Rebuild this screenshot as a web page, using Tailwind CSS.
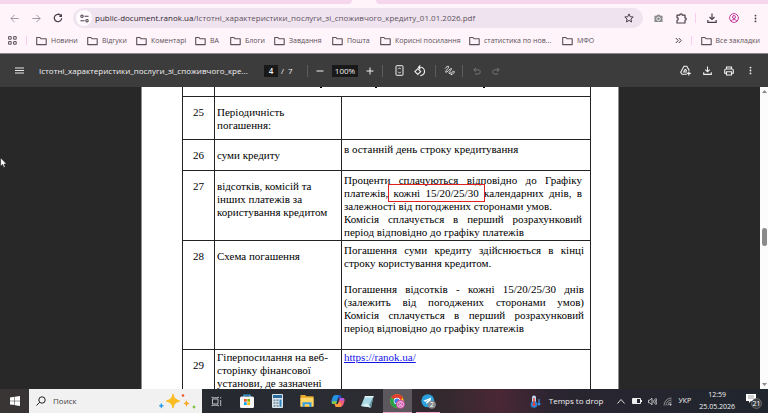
<!DOCTYPE html>
<html lang="uk">
<head>
<meta charset="utf-8">
<title>Істотні характеристики послуги</title>
<script src="https://cdn.jsdelivr.net/npm/@tailwindcss/browser@4"></script>
</head>
<body class="flex h-screen flex-col overflow-hidden bg-[#282828] font-['Open_Sans','Noto_Sans',sans-serif] text-[8px] leading-3">
<svg class="hidden" aria-hidden="true">
  <symbol id="folder" viewBox="0 0 11 10"><path d="M.7 8.2V1.5h3.2l1.1 1.2h5.2v5.9H.7z" fill="none" stroke="#5b5059" stroke-width="1.1" stroke-linejoin="round"/></symbol>
  <symbol id="dots" viewBox="0 0 10 10"><circle cx="5" cy="1.8" r="1"/><circle cx="5" cy="5" r="1"/><circle cx="5" cy="8.2" r="1"/></symbol>
  <symbol id="download" viewBox="0 0 10 10"><path d="M5 .5v6M2.5 4 5 6.5 7.500 4M.8 7v2.300h8.400V7" fill="none" stroke="currentColor" stroke-width="1.200"/></symbol>
</svg>

<header class="shrink-0 bg-[#fff4fa] text-[#5b5059]">
  <!-- Tab strip -->
  <div class="flex h-1 bg-[#fff4fa]">
    <div class="h-full w-[352px] rounded-br-md bg-[#f5d6ec]"></div>
    <div class="w-6"></div>
    <div class="h-full flex-1 rounded-bl-md bg-[#f5d6ec]"></div>
  </div>
  <!-- Address row -->
  <div class="flex h-7 items-center pr-2 pl-2">
    <button aria-label="Назад" class="w-[22px]"><svg class="ml-[2px] size-[9px]" viewBox="0 0 10 10" fill="none" stroke="#a097a0" stroke-width="1.1"><path d="M9.500 5H1M5 1 1 5l4 4"/></svg></button>
    <button aria-label="Вперед" class="w-[22px]"><svg class="ml-[2px] size-[9px]" viewBox="0 0 10 10" fill="none" stroke="#a097a0" stroke-width="1.1"><path d="M.5 5H9M5 1l4 4-4 4"/></svg></button>
    <button aria-label="Оновити" class="w-[21px]"><svg class="ml-[1px] size-[10px]" viewBox="0 0 10 10"><path d="M8.700 5.300A3.700 3.700 0 1 1 7.600 2.300L8.500 3.200" fill="none" stroke="#4a3f49" stroke-width="1.300"/><path d="M9 .8v3.200H5.800z" fill="#4a3f49"/></svg></button>
    <div class="flex h-5 min-w-0 flex-1 items-center rounded-full bg-[#efe3ef] pr-[9px] pl-[3px]">
      <button aria-label="Інформація про сайт" class="flex size-4 shrink-0 items-center justify-center rounded-full bg-[#fffafd]"><svg class="size-[9px]" viewBox="0 0 10 10" fill="none" stroke="#4a3f49" stroke-width="1.200"><circle cx="2.200" cy="2.500" r="1.300"/><path d="M5 2.500h4.500M.5 7.500H5"/><circle cx="7.800" cy="7.500" r="1.300"/></svg></button>
      <div class="ml-[3px] min-w-0 flex-1 whitespace-nowrap text-[#5f545e]" role="textbox" aria-label="Адреса" tabindex="0"><span class="text-[#30272f]">public-document.ranok.ua</span>/Істотні_характеристики_послуги_зі_споживчого_кредиту_01.01.2026.pdf</div>
      <button aria-label="Додати закладку"><svg class="size-[10px]" viewBox="0 0 10 10"><path d="M5 .9 6.200 3.700l3 .3L6.900 6l.7 3L5 7.400 2.400 9l.7-3L.8 4l3-.3z" fill="none" stroke="#4a3f49" stroke-width="1"/></svg></button>
    </div>
    <button aria-label="Камера" class="ml-[11px]"><svg class="size-[9px]" viewBox="0 0 10 10"><path d="M.5 2h2.300L3.500.8h3L7.200 2h2.300v7h-9z" fill="#8b8b8b"/><circle cx="5" cy="5.400" r="2" fill="none" stroke="#fff" stroke-width=".9"/></svg></button>
    <button aria-label="Розширення" class="ml-[13px]"><svg class="size-[11px]" viewBox="0 0 11 11"><path d="M1 2.200h2.700C3.700.4 6.300.4 6.300 2.200H9v2.700c1.700 0 1.700 2.200 0 2.200V10H1V7.300c1.700-.2 1.700-2.400 0-2.600z" fill="none" stroke="#4a3f49" stroke-width="1.200" stroke-linejoin="round"/></svg></button>
    <div class="ml-2 h-[10px] w-px bg-[#f9cdf0]"></div>
    <button aria-label="Завантаження" class="ml-[11px] text-[#4a3f49]"><svg class="size-[10px]"><use href="#download"/></svg></button>
    <button aria-label="Профіль" class="ml-3"><svg class="size-[10px]" viewBox="0 0 10 10" fill="none" stroke="#c23a9c"><circle cx="5" cy="5" r="4.400"/><circle cx="5" cy="4" r="1.500"/><path d="M2 8.200c1-2.200 5-2.200 6 0"/></svg></button>
    <button aria-label="Меню" class="ml-3"><svg class="size-[9px]" fill="#4a3f49"><use href="#dots"/></svg></button>
  </div>
  <!-- Bookmarks -->
  <nav class="flex h-[21px] items-center pb-1 pl-2 pr-2 text-[7px] whitespace-nowrap" aria-label="Закладки">
    <button aria-label="Програми"><svg class="size-[9px]" viewBox="0 0 9 9" fill="none" stroke="#5b5059"><path d="M.6.6h2.600v2.600H.6zM5.600.6h2.600v2.600H5.600zM.6 5.600h2.600v2.600H.6zM5.600 5.600h2.600v2.600H5.600z"/></svg></button>
    <div class="mr-[9px] ml-[9px] h-[9px] w-px bg-[#f9cdf0]"></div>
    <a href="#" class="flex w-[51px] items-center gap-1"><svg class="h-[10px] w-[11px] shrink-0"><use href="#folder"/></svg>Новини</a>
    <a href="#" class="flex w-[49px] items-center gap-1"><svg class="h-[10px] w-[11px] shrink-0"><use href="#folder"/></svg>Відгуки</a>
    <a href="#" class="flex w-[59px] items-center gap-1"><svg class="h-[10px] w-[11px] shrink-0"><use href="#folder"/></svg>Коментарі</a>
    <a href="#" class="flex w-[35px] items-center gap-1"><svg class="h-[10px] w-[11px] shrink-0"><use href="#folder"/></svg>ВА</a>
    <a href="#" class="flex w-[44px] items-center gap-1"><svg class="h-[10px] w-[11px] shrink-0"><use href="#folder"/></svg>Блоги</a>
    <a href="#" class="flex w-[58px] items-center gap-1"><svg class="h-[10px] w-[11px] shrink-0"><use href="#folder"/></svg>Завдання</a>
    <a href="#" class="flex w-[48px] items-center gap-1"><svg class="h-[10px] w-[11px] shrink-0"><use href="#folder"/></svg>Пошта</a>
    <a href="#" class="flex w-[89px] items-center gap-1"><svg class="h-[10px] w-[11px] shrink-0"><use href="#folder"/></svg>Корисні посилання</a>
    <a href="#" class="flex w-[93px] items-center gap-1"><svg class="h-[10px] w-[11px] shrink-0"><use href="#folder"/></svg>статистика по нов...</a>
    <a href="#" class="flex items-center gap-1"><svg class="h-[10px] w-[11px] shrink-0"><use href="#folder"/></svg>МФО</a>
    <button aria-label="Інші закладки" class="ml-auto"><svg class="size-[7px]" viewBox="0 0 7 7" fill="none" stroke="#4a3f49"><path d="m.8 1 2.400 2.500L.8 6M3.800 1l2.400 2.500L3.800 6"/></svg></button>
    <div class="mx-[9px] h-[9px] w-px bg-[#f9cdf0]"></div>
    <a href="#" class="flex items-center gap-1"><svg class="h-[10px] w-[11px] shrink-0"><use href="#folder"/></svg>Все закладки</a>
  </nav>
</header>

<!-- PDF toolbar -->
<div class="flex h-[34px] shrink-0 items-center border-t border-[#8a858a] bg-[#3c3c3c] pr-[13px] pl-[15px] text-[#f1f1f1]" role="toolbar" aria-label="Перегляд PDF">
  <button aria-label="Меню документа"><svg class="h-[7px] w-[9px]" viewBox="0 0 9 7" stroke="#e8e8e8"><path d="M0 1h9M0 3.500h9M0 6h9"/></svg></button>
  <h1 class="ml-[15px] w-[225px] font-medium whitespace-nowrap">Істотні_характеристики_послуги_зі_споживчого_кре...</h1>
  <input aria-label="Сторінка" value="4" class="h-3 w-[14px] bg-[#191919] text-center font-semibold">
  <span class="ml-[3px] w-[26px]">/ &nbsp;7</span>
  <span class="h-3 w-px bg-[#5c5c5c]"></span>
  <button aria-label="Зменшити" class="ml-2"><svg class="size-[8px]" viewBox="0 0 8 8" stroke="#f1f1f1"><path d="M.5 4h7"/></svg></button>
  <input aria-label="Масштаб" value="100%" class="ml-2 h-3 w-[26px] bg-[#191919] text-center font-medium">
  <button aria-label="Збільшити" class="ml-2"><svg class="size-[8px]" viewBox="0 0 8 8" stroke="#f1f1f1"><path d="M.5 4h7M4 .5v7"/></svg></button>
  <span class="ml-2 h-3 w-px bg-[#5c5c5c]"></span>
  <button aria-label="За розміром сторінки" class="ml-3"><svg class="h-[11px] w-[9px]" viewBox="0 0 9 11" fill="none" stroke="#f1f1f1"><rect x="1" y=".7" width="7" height="9.600" rx=".6"/><path d="M3.200 4.200 4.500 2.800l1.300 1.400M3.200 6.800l1.300 1.400 1.300-1.400" stroke-width=".9"/></svg></button>
  <button aria-label="Повернути" class="ml-[9px]"><svg class="size-[12px]" viewBox="0 0 12 12" fill="none" stroke="#f1f1f1" stroke-width="1.100"><path d="m4.800 3.700 2.900 2.900-2.900 2.900L1.900 6.600zM5.600 2.200h1.700a4.200 4.200 0 0 1 0 8.400M7.300.4 5.400 2.200l1.900 1.800"/></svg></button>
  <span class="ml-[10px] h-3 w-px bg-[#5c5c5c]"></span>
  <button aria-label="Малювати" class="ml-2"><svg class="size-[11px]" viewBox="0 0 11 11" fill="none" stroke="#f1f1f1" stroke-width=".9"><path d="M1 3.600C2.500 1.500 5 .3 4.700 2.100 4.300 3.700.7 6.500 1.800 7.300c1 .7 4.700-4.500 5.700-3.800C8.400 4.200 4.200 7.600 5 8.400c.6.5 1.400-.4 2-.9M7 9.800l.2-1.500 2.300-2.400 1.100 1.100-2.300 2.400z"/></svg></button>
  <span class="ml-[7px] h-3 w-px bg-[#5c5c5c]"></span>
  <button aria-label="Скасувати" class="ml-[10px]"><svg class="size-[8px]" viewBox="0 0 8 8" fill="none" stroke="#757575"><path d="M2.800.8.800 2.800l2 2M.8 2.800h4.400a2.100 2.100 0 0 1 0 4.200H2"/></svg></button>
  <button aria-label="Повторити" class="ml-[11px]"><svg class="size-[8px]" viewBox="0 0 8 8" fill="none" stroke="#757575"><path d="m5.200.8 2 2-2 2M7.200 2.800H2.800a2.100 2.100 0 0 0 0 4.200H6"/></svg></button>
  <button aria-label="Зберегти на Диску" class="ml-auto"><svg class="size-[11px]" viewBox="0 0 11 11" fill="none" stroke="#f1f1f1" stroke-width="1.100"><path d="M6.800 9.300H2L.7 7.200 4 1.300h2.800L9.300 5.600M5.400 4 3.700 7h3.100M5.400 4l1.300 2.300M8.800 6.400v4M6.800 8.400h4"/></svg></button>
  <button aria-label="Завантажити" class="ml-3"><svg class="size-[9px]"><use href="#download"/></svg></button>
  <button aria-label="Друк" class="ml-3"><svg class="size-[10px]" viewBox="0 0 10 10" fill="none" stroke="#f1f1f1" stroke-width="1.100"><path d="M2.500 3V1h5v2M2.300 7.200H.7V4.300Q.7 3 2 3h6q1.300 0 1.300 1.300v2.900H7.700M2.500 5.700h5V9h-5z"/></svg></button>
  <button aria-label="Додатково" class="ml-3"><svg class="size-[9px]" fill="#f1f1f1"><use href="#dots"/></svg></button>
</div>

<!-- Document viewer -->
<main class="relative flex min-h-0 flex-1 overflow-hidden font-['Liberation_Serif',serif] text-[11px] leading-[13px] text-black">
  <div class="min-w-0 flex-1">
    <article class="mx-auto h-full w-[478px] border-x border-[#8e8e8e] bg-white pl-10">
      <table class="w-[409px] table-fixed border-collapse [&_td]:border [&_td]:border-[#222] [&_td]:p-0 [&_td]:align-top">
        <colgroup><col class="w-8"><col class="w-[127px]"><col></colgroup>
        <tbody>
          <tr class="h-[9px]"><td class="border-t-0!"></td><td colspan="2" class="border-t-0!"><svg class="block h-[2px] w-full" aria-hidden="true"><path d="M105 0h2v1h-2zM160 0h2v1h-2zM268 0h2v1h-2z"/></svg></td></tr>
          <tr class="h-[43px]"><td class="pt-[9px]! text-center">25</td><td class="pt-[9px]! pl-[2px]!">Періодичність<br>погашення:</td><td></td></tr>
          <tr class="h-[31px]"><td class="pt-[9px]! text-center">26</td><td class="pt-[9px]! pl-[2px]!">суми кредиту</td><td class="pt-[3px]! pl-[2px]!">в останній день строку кредитування</td></tr>
          <tr class="h-[70px]"><td class="pt-[9px]! text-center">27</td><td class="pt-[9px]! pl-[2px]!">відсотків, комісій та<br>інших платежів за<br>користування кредитом</td>
            <td class="pt-[3px]! pr-[8px]! pl-[2px]! whitespace-nowrap">
              <p class="[text-align-last:justify]">Проценти сплачуються відповідно до Графіку</p>
              <p class="[text-align-last:justify]">платежів, <span class="relative">кожні 15/20/25/30<span class="absolute -inset-x-[6px] -inset-y-[3px] border border-[#e02020]"></span></span> календарних днів, в</p>
              <p>залежності від погоджених сторонами умов.</p>
              <p class="[text-align-last:justify]">Комісія сплачується в перший розрахунковий</p>
              <p>період відповідно до графіку платежів</p>
            </td></tr>
          <tr class="h-[109px]"><td class="pt-[9px]! text-center">28</td><td class="pt-[9px]! pl-[2px]!">Схема погашення</td>
            <td class="pt-[3px]! pr-[6px]! pl-[2px]! whitespace-nowrap">
              <p class="[text-align-last:justify]">Погашення суми кредиту здійснюється в кінці</p>
              <p class="mb-[13px]">строку користування кредитом.</p>
              <p class="[text-align-last:justify]">Погашення відсотків - кожні 15/20/25/30 днів</p>
              <p class="[text-align-last:justify]">(залежить від погоджених сторонами умов)</p>
              <p class="[text-align-last:justify]">Комісія сплачується в перший розрахунковий</p>
              <p>період відповідно до графіку платежів</p>
            </td></tr>
          <tr class="h-[60px]"><td class="pt-[9px]! text-center">29</td><td class="pt-px! pl-[2px]!">Гіперпосилання на веб-<br>сторінку фінансової<br>установи, де зазначені</td><td class="pt-px! pl-[2px]!"><a href="#" class="text-[#1414e6] underline">https://ranok.ua/</a></td></tr>
        </tbody>
      </table>
    </article>
  </div>
  <div class="flex w-2 flex-col items-center bg-[#fcfcfc] py-[3px]" aria-hidden="true">
    <svg class="h-[3px] w-[5px]" viewBox="0 0 5 3"><path d="M0 3 2.500 0 5 3z" fill="#8a8a8a"/></svg>
    <div class="mt-[135px] h-[18px] w-[5px] rounded-full bg-[#8a8a8a]"></div>
    <svg class="mt-auto h-[3px] w-[5px]" viewBox="0 0 5 3"><path d="M0 0h5L2.500 3z" fill="#8a8a8a"/></svg>
  </div>
  <svg class="absolute top-[70px] left-0 h-3 w-[7px]" viewBox="0 0 7 12" aria-hidden="true"><path d="M.6.800v8.400l2-1.800 1.200 3 1.400-.6L4 7h2.500z" fill="#fff" stroke="#111" stroke-width=".5"/></svg>
</main>

<!-- Taskbar -->
<footer class="flex h-6 shrink-0 items-stretch bg-[linear-gradient(90deg,#3a3535_0%,#262a30_28%,#2b2d33_45%,#33292f_58%,#4a2735_65%,#2a2530_72%,#20262e_100%)] text-[#f0f0f0]">
  <button aria-label="Пуск" class="flex w-[29px] items-center justify-center"><svg class="size-[10px]" viewBox="0 0 10 10" fill="#fff"><path d="M0 1.400 4.500.8v3.900H0zM5 .700 10 0v4.700H5zM0 5.200h4.500v3.900L0 8.500zM5 5.200h5V10l-5-.700z"/></svg></button>
  <label class="flex w-[173px] items-center bg-[#f1f1f1] pl-[7px]">
    <svg class="size-[10px] shrink-0" viewBox="0 0 10 10" fill="none" stroke="#222"><circle cx="6" cy="4" r="3.200"/><path d="M3.700 6.300.5 9.500"/></svg>
    <input aria-label="Пошук" placeholder="Поиск" class="ml-[7px] w-[106px] placeholder:text-[#444]">
    <svg class="h-[18px] w-[38px] shrink-0" viewBox="0 0 38 18"><path d="M14 2c1.200 4.500 2 5.400 6.700 7-4.700 1.600-5.500 2.500-6.700 7-1.200-4.500-2-5.400-6.700-7C12 7.400 12.800 6.500 14 2z" fill="#fbbc21" stroke="#fbbc21" stroke-width="1" stroke-linejoin="round"/><path d="M27.500 8c.6 2.200 1 2.700 3.200 3.500-2.200.8-2.600 1.300-3.200 3.500-.6-2.200-1-2.700-3.200-3.500 2.200-.8 2.600-1.300 3.200-3.500z" fill="#f7a928"/><path d="M2.300 11.500c.4 1.500.7 1.800 2.200 2.300-1.500.6-1.800.9-2.200 2.300-.4-1.400-.7-1.700-2.200-2.300 1.500-.5 1.800-.8 2.200-2.300z" fill="#1e9bf0" stroke="#1e9bf0" stroke-width=".6"/><circle cx="24" cy="3.500" r="1.300" fill="#ee5b2b"/><circle cx="35" cy="15" r="1.400" fill="#7cc242"/></svg>
  </label>
  <button aria-label="Подання завдань" class="flex w-7 items-center justify-center"><svg class="size-[11px]" viewBox="0 0 11 11" fill="none" stroke="#c8c8c8" stroke-width=".9"><path d="M1.500 3h5.500v5H1.500zM.5 1.300h1M7 1.300h1M.5 9.700h1M7 9.700h1M1.500 1v.8h5.500V1M1.500 10v-.8h5.500v.8M9.700 1v1.500M9.700 4v6"/></svg></button>
  <button aria-label="Microsoft Store" class="flex w-[34px] items-center justify-center"><svg class="size-[14px]" viewBox="0 0 14 14"><path d="M4 3V1.200h6V3" fill="none" stroke="#39a9e8" stroke-width="1.200"/><rect y="2.500" width="14" height="11.500" rx="1.500" fill="#f7f7f7"/><path d="M4 5h2.700v2.700H4z" fill="#f25022"/><path d="M7.300 5H10v2.700H7.300z" fill="#7fba00"/><path d="M4 8.300h2.700V11H4z" fill="#00a4ef"/><path d="M7.300 8.300H10V11H7.300z" fill="#ffb900"/></svg></button>
  <button aria-label="Калькулятор" class="flex w-[26px] items-center justify-center"><svg class="h-[14px] w-[11px]" viewBox="0 0 11 14"><rect width="11" height="14" rx="1" fill="#d9e4ec"/><path d="M1 1h9v3H1z" fill="#2c6a9b"/><path d="M1.500 5.500h2v1.800h-2zM4.500 5.500h2v1.800h-2zM1.500 8.300h2v1.800h-2zM4.500 8.300h2v1.800h-2zM1.500 11h2v1.800h-2zM4.500 11h2v1.800h-2z" fill="#7b92a3"/><path d="M7.500 5.500h2v7.300h-2z" fill="#2f84c4"/></svg></button>
  <button aria-label="Провідник" class="flex w-[34px] items-center justify-center"><svg class="h-[12px] w-[14px]" viewBox="0 0 14 12"><path d="M.5 0h4.700l1 1.300h7.300V12H.5z" fill="#e9a82d"/><path d="M.5 2.800h13V11H.5z" fill="#ffd867"/><path d="M2.500 12V7.300h9V12H9.300V9.300H4.700V12z" fill="#3b99dd"/></svg></button>
  <button aria-label="Copilot" class="flex w-[27px] items-center justify-center"><svg class="size-[14px]" viewBox="0 0 14 14"><path d="M4.500 1h4.700l1.200 3H7L5 10H2.300C0 10 .200 7.500 1 5.200 1.800 2.600 2.700 1 4.500 1z" fill="#2593e0"/><path d="M1.100 7.500 5.800 7 5 10H2.300C1 10 .800 8.800 1.100 7.500z" fill="#8dc63f"/><path d="M9.500 13H4.800l-1.200-3H7l2-6h2.700C14 4 13.800 6.500 13 8.800c-.8 2.600-1.700 4.200-3.500 4.200z" fill="#ef5b7b"/><path d="M4.800 13 3.600 10H7l.7-2 2.700 1.500L9.500 13z" fill="#fb9a3c"/><path d="M9 4h2.700c1.300 0 1.700 1 1.500 2.500L8.200 6.400z" fill="#b35ae0"/><path d="M7.500 1h1.700l1.200 3H7z" fill="#2550c8"/></svg></button>
  <button aria-label="Блокнот" class="flex w-[32px] items-center justify-center"><svg class="size-[13px]" viewBox="0 0 13 13"><path d="M4 1h8.500L10 12.500 0 11z" fill="#a9d9e4"/><path d="M12.500 1 10 12.500 7.500 12z" fill="#5e8d98"/><path d="M4 1h8.500l-.3 1.500H3.500z" fill="#e7f3f5"/><path d="M0 11 6 8l4 4.500z" fill="#d4eef2"/></svg></button>
  <button aria-label="Google Chrome" class="flex w-[29px] items-center justify-center border-b border-[#f3a6cd] bg-[#5c585d] pt-px"><svg class="size-[15px]" viewBox="0 0 15 15"><circle cx="7" cy="7" r="6.800" fill="#fbc116"/><path d="M7 7 1.100 3.600A6.800 6.800 0 0 1 12.900 3.600z" fill="#e33b2e"/><path d="M7 7 1.100 3.600A6.800 6.800 0 0 0 7 13.800L9.500 9z" fill="#26a146"/><path d="M7 3.600h5.900L10 7z" fill="#e33b2e"/><circle cx="7" cy="7" r="3.300" fill="#fff"/><circle cx="7" cy="7" r="2.600" fill="#3b7de8"/><circle cx="10.500" cy="10.300" r="4.500" fill="#c84fa6"/><g fill="none" stroke="#f9d5ee" stroke-width=".8"><circle cx="10.500" cy="10.300" r="3"/><circle cx="10.500" cy="9.500" r="1.100"/><path d="M8.500 12.300c.8-1.200 3.200-1.200 4 0"/></g></svg></button>
  <button aria-label="Telegram" class="ml-1 flex w-6 items-center justify-center border-b border-[#f3a6cd] pt-px"><svg class="size-[15px]" viewBox="0 0 15 15"><circle cx="6.800" cy="6.800" r="6.500" fill="#2ba0dc"/><path d="m2.300 6.700 7.900-3.200-1.300 7-2.300-1.700-1.200 1.200-.2-2.100L8 5.600 4.200 7.700z" fill="#fff"/><circle cx="10.800" cy="10.600" r="4.200" fill="#85898e"/><text x="10.800" y="13" text-anchor="middle" font-size="7" fill="#fff">2</text></svg></button>
  <button class="ml-auto flex items-center gap-2"><svg class="h-[13px] w-[11px]" viewBox="0 0 11 13"><rect x="2" y=".5" width="4" height="9" rx="2" fill="#c4dcf3"/><circle cx="4" cy="9.500" r="3.300" fill="#2585dc"/><path d="M3.200 3h1.600v6H3.200z" fill="#e4473c"/><circle cx="4" cy="9.500" r="1.500" fill="#e4473c"/><path d="M9 4v6M7.600 8.500 9 10l1.400-1.500" fill="none" stroke="#3896ef" stroke-width="1.100"/></svg>Temps to drop</button>
  <div class="ml-[14px] flex items-center gap-[6px] text-[7px]">
    <svg class="h-[5px] w-[8px]" viewBox="0 0 8 5" fill="none" stroke="#ddd"><path d="m.5 4.500 3.500-4 3.500 4"/></svg>
    <svg class="ml-px h-[6px] w-[10px]" viewBox="0 0 10 6"><path d="M.5.500h8v5h-8z" fill="none" stroke="#eee"/><path d="M1 1h4v4H1zM9 2h1v2H9z" fill="#eee"/></svg>
    <svg class="size-[9px]" viewBox="0 0 9 9" fill="none" stroke="#ddd" stroke-width=".8"><path d="M.5 3.200h1.300L4 1.200v6.600l-2.200-2H.5zM5.300 3.300q.8 1.200 0 2.400M6.600 2.200q1.700 2.300 0 4.600M7.800 1q2.300 3.500 0 7"/></svg>
    <svg class="size-[9px]" viewBox="0 0 9 9" fill="none" stroke="#aaa" stroke-width=".8"><path d="M1 8.500A7.500 7.500 0 0 1 8.500 1M3 8.500A5.500 5.500 0 0 1 8.500 3M5 8.500A3.500 3.500 0 0 1 8.500 5"/><circle cx="7.500" cy="7.500" r=".8" fill="#eee"/></svg>
    <button>УКР</button>
  </div>
  <time class="ml-2 flex flex-col justify-center text-center text-[7px]"><span>12:59</span><span>25.05.2026</span></time>
  <button aria-label="Сповіщення: 21" class="mr-[6px] ml-[11px] flex items-center"><svg class="size-[16px]" viewBox="0 0 16 16"><path d="M0 1h10v7H5L3 10V8H0z" fill="#fff"/><path d="M2 3h6M2 5h6" stroke="#777" stroke-width=".7"/><circle cx="10.500" cy="10.500" r="5" fill="#3b3f44" stroke="#8a8a8a" stroke-width=".6"/><text x="10.500" y="13" text-anchor="middle" font-size="7" fill="#fff">21</text></svg></button>
</footer>
</body>
</html>
